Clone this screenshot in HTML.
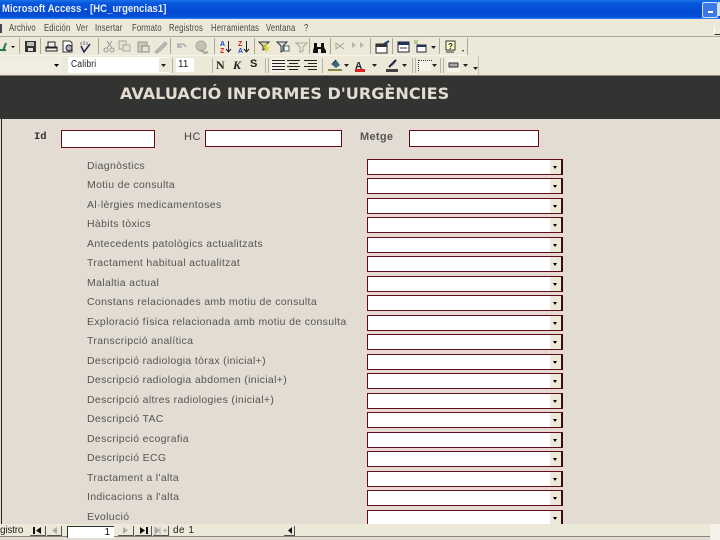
<!DOCTYPE html>
<html><head><meta charset="utf-8"><style>
html,body{margin:0;padding:0}
#p{position:relative;width:720px;height:540px;overflow:hidden;background:#e2dcd2;font-family:"Liberation Sans",sans-serif}
#p div,#p span.a,#p svg{position:absolute}
.l{left:87px;font-size:10.5px;letter-spacing:.34px;color:#555;white-space:nowrap;line-height:12px;height:12px}
.c{left:367px;width:193px;height:14px;background:#fff;border:1px solid #5a1020;border-right:2px solid #301018;box-shadow:0 0 0 1px #f0d4d2}
.b{left:549px;width:12px;height:14px;background:#ece9d8;border-left:1px solid #fff;box-sizing:border-box}
.b i{position:absolute;left:3px;top:6px;width:0;height:0;border:2.500px solid transparent;border-top:3px solid #000;border-bottom:0}
.t{height:16px;background:#fff;border:1px solid #5a1020;box-shadow:0 0 0 1px #f0d4d2;box-sizing:border-box}
.m{top:22px;font-size:10.5px;color:#444;letter-spacing:.25px;white-space:nowrap;transform-origin:0 0;transform:scaleX(.73)}
.f{font-size:10px;color:#222;white-space:nowrap}
</style></head><body><div id="p">
<div style="left:0;top:0;width:720px;height:19px;background:linear-gradient(#1a74e8 0,#0758de 3px,#0348d0 12px,#0450dc 17px,#3a86ee 19px)"></div>
<div style="left:2px;top:3px;font-size:11px;font-weight:bold;color:#e8eefc;letter-spacing:.1px;white-space:nowrap;transform-origin:0 0;transform:scaleX(.86)">Microsoft Access - [HC_urgencias1]</div>
<div style="left:702px;top:2px;width:14px;height:14px;background:#3d78e6;border:1px solid #cfe0fa;border-radius:2px"></div>
<div style="left:708px;top:11px;width:5px;height:2px;background:#fff"></div>
<div style="left:718px;top:2px;width:2px;height:14px;background:#cfe0fa"></div>

<div style="left:0;top:19px;width:720px;height:57px;background:#ece9d8"></div>
<div style="left:0;top:36px;width:720px;height:1px;background:#aca899"></div>
<div style="left:0;top:24px;width:2px;height:9px;background:#445"></div>
<span class="a m" style="left:9px">Archivo</span>
<span class="a m" style="left:44px">Edición</span>
<span class="a m" style="left:76px">Ver</span>
<span class="a m" style="left:95px">Insertar</span>
<span class="a m" style="left:132px">Formato</span>
<span class="a m" style="left:169px">Registros</span>
<span class="a m" style="left:211px">Herramientas</span>
<span class="a m" style="left:266px">Ventana</span>
<span class="a m" style="left:304px">?</span>
<div style="left:714px;top:26px;width:6px;height:8px;border-bottom:1px solid #333;border-left:1px solid #fff"></div>

<!-- toolbar 1 -->
<svg style="left:0;top:37px" width="480" height="19" viewBox="0 37 480 19">
<path d="M0 50h6M6 43l-3 8" stroke="#275" stroke-width="2" fill="none"/>
<path d="M11 46h4l-2 2z" fill="#000"/>
<path d="M19.500 38v16M40.500 38v16M98.500 38v16M170.500 38v16M214.500 38v16M254.500 38v16M309.500 38v16M330.500 38v16M370.500 38v16M392.500 38v16M439.500 38v16M467.500 38v17" stroke="#aca899" stroke-width="1"/>
<rect x="25" y="41" width="11" height="11" fill="#333"/><rect x="27" y="42" width="7" height="4" fill="#bbb"/><rect x="28" y="48" width="5" height="3" fill="#ddd"/>
<path d="M46 47h11v4H46zM48 42h7v5h-7z" fill="#eee" stroke="#222"/><path d="M46 48h11" stroke="#222"/>
<path d="M63 41h7l2 2v9h-9z" fill="#fff" stroke="#333"/><circle cx="69" cy="48" r="3" fill="#aac" stroke="#222"/>
<path d="M81 42v3M84 41v4M87 42v3" stroke="#777"/><path d="M81 46l3 6 6-8" fill="none" stroke="#225" stroke-width="1.500"/>
<path d="M107 41l5 7M112 41l-5 7" stroke="#999"/><circle cx="106" cy="50" r="2" fill="none" stroke="#999"/><circle cx="112" cy="50" r="2" fill="none" stroke="#999"/>
<rect x="119" y="41" width="7" height="8" fill="#e8e4d4" stroke="#a9a698"/><rect x="123" y="45" width="7" height="6" fill="#e8e4d4" stroke="#a9a698"/>
<rect x="138" y="42" width="9" height="10" fill="#ccc8b8" stroke="#999"/><rect x="142" y="46" width="7" height="6" fill="#e8e4d4" stroke="#888"/>
<path d="M155 52l4-4 6-6 2 2-6 6-4 3z" fill="#bbb" stroke="#aaa"/>
<path d="M178 47c2-4 6-4 8 0M178 43v4h4" fill="none" stroke="#aaa" stroke-width="1.500"/>
<circle cx="201" cy="46" r="5" fill="#c5c2b4" stroke="#a9a698"/><path d="M200 50l5 3 3-1" fill="none" stroke="#a9a698" stroke-width="2"/>
<text x="220" y="46" font-size="7" font-weight="bold" fill="#24c" font-family="Liberation Sans">A</text><text x="220" y="53" font-size="7" font-weight="bold" fill="#c22" font-family="Liberation Sans">Z</text><path d="M228.500 41v11M226 49l2.500 3 2.500-3" stroke="#222" fill="none"/>
<text x="238" y="46" font-size="7" font-weight="bold" fill="#c22" font-family="Liberation Sans">Z</text><text x="238" y="53" font-size="7" font-weight="bold" fill="#24c" font-family="Liberation Sans">A</text><path d="M246.500 41v11M244 49l2.500 3 2.500-3" stroke="#222" fill="none"/>
<path d="M259 42h10l-4 4v3l-2 1v-4z" fill="#dda" stroke="#333"/><path d="M267 44l-2 4h3l-2 4" stroke="#dd0" fill="none" stroke-width="1.500"/>
<path d="M277 42h10l-4 4v5l-2 1v-6z" fill="#ddd" stroke="#334"/><rect x="284" y="46" width="5" height="5" fill="#fff" stroke="#466"/>
<path d="M296 43h11l-4 4v4l-3 1v-5z" fill="none" stroke="#a9a698"/>
<path d="M314 43h3v4h4v-4h3v4l2 4v2h-5v-4h-3v4h-5v-2l1-4z" fill="#111"/>
<path d="M336 43l4 3-4 3zM344 43l-4 3 4 3" fill="none" stroke="#a9a698"/>
<path d="M352 42l4 3-4 3zM360 42l4 3-4 3" fill="#b8b5a6"/>
<rect x="376" y="44" width="11" height="9" fill="#fff" stroke="#222"/><rect x="376" y="44" width="11" height="3" fill="#333"/><path d="M384 44l5-3" stroke="#246" stroke-width="2"/>
<rect x="398" y="42" width="11" height="10" fill="#fff" stroke="#223"/><rect x="398" y="42" width="11" height="3" fill="#235"/><path d="M400 48h7" stroke="#333"/>
<path d="M414 40l4 4M418 40l-4 4" stroke="#8b6" /><rect x="417" y="45" width="9" height="7" fill="#fff" stroke="#223"/><rect x="417" y="45" width="9" height="2" fill="#235"/>
<path d="M431 46h5l-2.500 3z" fill="#222"/>
<rect x="446" y="41" width="9" height="9" fill="#ffc" stroke="#333"/><text x="448" y="49" font-size="8" font-weight="bold" fill="#222" font-family="Liberation Sans">?</text><path d="M446 52h8" stroke="#333"/>
<path d="M462 50h2l-1 2z" fill="#222"/>
</svg>
<div style="left:0;top:55px;width:467px;height:1px;background:#f6f4ea"></div>

<!-- toolbar 2 -->
<div style="left:0;top:57px;width:62px;height:16px;background:#f0eee2"></div>
<svg style="left:0;top:56px" width="480" height="20" viewBox="0 56 480 20">
<path d="M54 64h5l-2.500 3z" fill="#000"/>
<rect x="68" y="57" width="101" height="16" fill="#fff"/>
<rect x="159" y="58" width="10" height="14" fill="#ece9d8"/>
<path d="M161 64h5l-2.500 3zM197 64h5l-2.500 3z" fill="#222"/>
<rect x="176" y="58" width="18" height="14" fill="#fff"/>
<rect x="194" y="58" width="12" height="14" fill="#ece9d8"/>
<path d="M172.500 58v15M212.500 58v15M265.500 58v15M322.500 58v15M412.500 58v15M440.500 58v15M268.500 58v15M415.500 58v15M443.500 58v15" stroke="#b8b4a4"/>
<rect x="271" y="58" width="14" height="14" fill="#f6f4ea"/>
<path d="M272 60.500h13M272 63.500h13M272 66.500h13M272 69.500h13M287 60.500h13M289 63.500h9M287 66.500h13M289 69.500h9M304 60.500h13M308 63.500h9M304 66.500h13M308 69.500h9" stroke="#222"/>
<path d="M328 70h14" stroke="#8a8a40" stroke-width="2"/><path d="M331 64l5-4 4 5-4 3z" fill="#3a6a7a"/><path d="M333 63l3-3" stroke="#222"/>
<path d="M344 64h5l-2.500 3z" fill="#222"/>
<text x="355" y="69" font-size="10" font-weight="bold" fill="#223" font-family="Liberation Sans">A</text><rect x="355" y="69" width="10" height="3" fill="#d22"/>
<path d="M372 64h5l-2.500 3z" fill="#222"/>
<rect x="386" y="69" width="12" height="3" fill="#444"/><path d="M389 67l7-7" stroke="#224" stroke-width="2"/><path d="M392 66l3-3" stroke="#9a9" stroke-width="1"/>
<path d="M402 64h5l-2.500 3z" fill="#222"/>
<rect x="418" y="60" width="13" height="11" fill="#f6f4ea"/><path d="M418.500 60v11M419 60.500h13" stroke="#333" stroke-dasharray="1 1"/>
<path d="M432 64h5l-2.500 3z" fill="#222"/>
<rect x="447" y="58" width="13" height="14" fill="#f6f4ea"/><rect x="449" y="63" width="9" height="4" fill="#aaa" stroke="#333"/>
<path d="M463 64h5l-2.500 3zM473 67h5l-2.500 3z" fill="#222"/>
<path d="M478.500 56v20" stroke="#c5c2b4"/>
</svg>
<span class="a f" style="left:71px;top:59px;letter-spacing:.2px;transform-origin:0 0;transform:scaleX(.85)">Calibri</span>
<span class="a f" style="left:178px;top:59px">11</span>
<span class="a" style="left:216px;top:58px;font:bold 12px 'Liberation Serif',serif;color:#222">N</span>
<span class="a" style="left:233px;top:58px;font:italic bold 12px 'Liberation Serif',serif;color:#222">K</span>
<span class="a" style="left:250px;top:58px;font:bold 11px 'Liberation Sans',sans-serif;color:#222">S</span>
<div style="left:0;top:75px;width:720px;height:1px;background:#8a8778"></div>

<!-- header -->
<div style="left:0;top:76px;width:720px;height:43px;background:#333331"></div>
<div style="left:120px;top:84px;font:bold 16px 'DejaVu Sans','Liberation Sans',sans-serif;color:#e2dcd2;white-space:nowrap;transform-origin:0 0;transform:scaleX(1.005)">AVALUACIÓ INFORMES D'URGÈNCIES</div>

<div style="left:1px;top:119px;width:1px;height:405px;background:#222"></div>

<span class="a" style="left:34px;top:131px;font:bold 10.500px 'Liberation Mono',monospace;color:#333">Id</span>
<div class="t" style="left:61px;top:130px;width:94px;height:18px"></div>
<span class="a" style="left:184px;top:131px;font-size:11px;letter-spacing:.5px;color:#444">HC</span>
<div class="t" style="left:205px;top:130px;width:137px;height:17px"></div>
<span class="a" style="left:360px;top:131px;font-size:11px;font-weight:bold;letter-spacing:.3px;color:#555">Metge</span>
<div class="t" style="left:409px;top:130px;width:130px;height:17px"></div>

<span class="a l" style="top:160px">Diagnòstics</span>
<span class="a l" style="top:179px">Motiu de consulta</span>
<span class="a l" style="top:199px">Al·lèrgies medicamentoses</span>
<span class="a l" style="top:218px">Hàbits tòxics</span>
<span class="a l" style="top:238px">Antecedents patològics actualitzats</span>
<span class="a l" style="top:257px">Tractament habitual actualitzat</span>
<span class="a l" style="top:277px">Malaltia actual</span>
<span class="a l" style="top:296px">Constans relacionades amb motiu de consulta</span>
<span class="a l" style="top:316px">Exploració física relacionada amb motiu de consulta</span>
<span class="a l" style="top:335px">Transcripció analítica</span>
<span class="a l" style="top:355px">Descripció radiologia tòrax (inicial+)</span>
<span class="a l" style="top:374px">Descripció radiologia abdomen (inicial+)</span>
<span class="a l" style="top:394px">Descripció altres radiologies (inicial+)</span>
<span class="a l" style="top:413px">Descripció TAC</span>
<span class="a l" style="top:433px">Descripció ecografia</span>
<span class="a l" style="top:452px">Descripció ECG</span>
<span class="a l" style="top:472px">Tractament a l'alta</span>
<span class="a l" style="top:491px">Indicacions a l'alta</span>
<span class="a l" style="top:511px">Evolució</span>

<div class="c" style="top:159px"></div><div class="b" style="top:160px"><i></i></div>
<div class="c" style="top:178px"></div><div class="b" style="top:179px"><i></i></div>
<div class="c" style="top:198px"></div><div class="b" style="top:199px"><i></i></div>
<div class="c" style="top:217px"></div><div class="b" style="top:218px"><i></i></div>
<div class="c" style="top:237px"></div><div class="b" style="top:238px"><i></i></div>
<div class="c" style="top:256px"></div><div class="b" style="top:257px"><i></i></div>
<div class="c" style="top:276px"></div><div class="b" style="top:277px"><i></i></div>
<div class="c" style="top:295px"></div><div class="b" style="top:296px"><i></i></div>
<div class="c" style="top:315px"></div><div class="b" style="top:316px"><i></i></div>
<div class="c" style="top:334px"></div><div class="b" style="top:335px"><i></i></div>
<div class="c" style="top:354px"></div><div class="b" style="top:355px"><i></i></div>
<div class="c" style="top:373px"></div><div class="b" style="top:374px"><i></i></div>
<div class="c" style="top:393px"></div><div class="b" style="top:394px"><i></i></div>
<div class="c" style="top:412px"></div><div class="b" style="top:413px"><i></i></div>
<div class="c" style="top:432px"></div><div class="b" style="top:433px"><i></i></div>
<div class="c" style="top:451px"></div><div class="b" style="top:452px"><i></i></div>
<div class="c" style="top:471px"></div><div class="b" style="top:472px"><i></i></div>
<div class="c" style="top:490px"></div><div class="b" style="top:491px"><i></i></div>
<div class="c" style="top:510px"></div><div class="b" style="top:511px"><i></i></div>

<!-- status / nav bar -->
<div style="left:0;top:524px;width:720px;height:16px;background:#ece9d8"></div>
<div style="left:0;top:536px;width:710px;height:1px;background:#8a8778"></div>
<div style="left:0;top:537px;width:720px;height:3px;background:#e2dcd2"></div>
<div style="left:710px;top:524px;width:10px;height:16px;background:#f4f2ea"></div>
<span class="a f" style="left:0;top:525px;letter-spacing:-.2px">gistro</span>
<svg style="left:0;top:524px" width="300" height="14" viewBox="0 524 300 14">
<path d="M30 535.500h15M45.500 526v10M47 535.500h14M61.500 526v10M118 535.500h15M133.500 526v10M135 535.500h16M151.500 526v10M153 535.500h15M168.500 526v10M284 535.500h11M294.500 526v10" stroke="#555"/>
<path d="M33 527v7h2v-7zM41 527l-5 3.500 5 3.500z" fill="#111"/>
<path d="M57 527l-5 3.500 5 3.500z" fill="#aaa"/>
<path d="M123 527l5 3.500-5 3.500z" fill="#b0ad9e"/>
<path d="M140 527l5 3.500-5 3.500zM146 527v7h2v-7z" fill="#111"/>
<path d="M155 527l4 3.500-4 3.500zM160 527v7M163 530.500h4M165 528.500v4" stroke="#aaa" fill="#aaa"/>
<path d="M292 527l-4 3.500 4 3.500z" fill="#111"/>
</svg>
<div style="left:67px;top:526px;width:46px;height:11px;background:#fff;border-left:1px solid #333;border-top:1px solid #333;text-align:right;font-size:10px;line-height:11px;color:#111"><span style="padding-right:4px">1</span></div>
<span class="a f" style="left:173px;top:525px;letter-spacing:.5px">de 1</span>
</div></body></html>
